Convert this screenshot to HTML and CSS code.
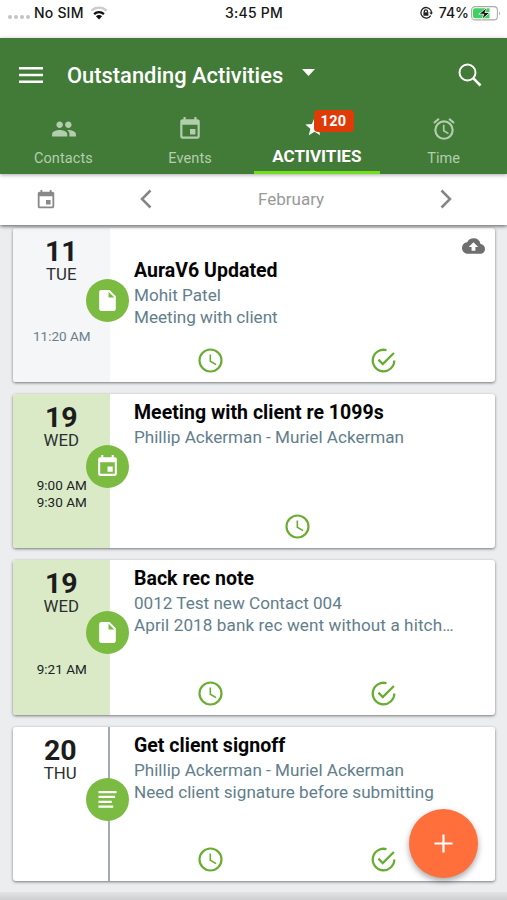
FILE: index.html
```html
<!DOCTYPE html>
<html lang="en">
<head>
<meta charset="utf-8">
<title>Outstanding Activities</title>
<link rel="stylesheet" href="styles.css">
</head>
<body>
<svg class="defs" aria-hidden="true">
  <symbol id="calendar" viewBox="0 0 24 24"><path d="M17 12h-5v5h5v-5zM16 1v2H8V1H6v2H5c-1.11 0-1.99.9-1.99 2L3 19c0 1.1.89 2 2 2h14c1.1 0 2-.9 2-2V5c0-1.1-.9-2-2-2h-1V1h-2zm3 18H5V8h14v11z"/></symbol>
  <symbol id="file" viewBox="0 0 24 24"><path d="M6 2c-1.1 0-2 .9-2 2v16c0 1.1.9 2 2 2h12c1.1 0 2-.9 2-2V8l-6-6H6zm7 7V3.500L18.500 9H13z"/></symbol>
  <symbol id="clock" viewBox="0 0 24 24"><path d="M12 2a10 10 0 1 0 0 20 10 10 0 0 0 0-20zm0 18.200a8.200 8.200 0 1 1 0-16.400 8.200 8.200 0 0 1 0 16.400zM12.500 7H11.200v6l5.100 3 .7-1.100-4.500-2.600V7z"/></symbol>
  <symbol id="check" viewBox="0 0 24 24"><path d="M20.900 12A8.900 8.900 0 1 1 14.500 3.500M7.800 11.300l3.600 3.700L20.600 5.800" fill="none" stroke="currentColor" stroke-width="1.900"/></symbol>
</svg>
<div class="screen">
  <div class="status">
    <div class="status-left">
      <span class="dots"><i></i><i></i><i></i><i></i></span>
      <span class="sim">No SIM</span>
      <svg class="wifi" viewBox="0 0 18 14"><g fill="none" stroke-width="2.300"><path stroke="#ccc" d="M1.300 4.800a11 11 0 0 1 15.400 0"/><path stroke="#111" d="M4.100 8.100a7 7 0 0 1 9.800 0"/></g><path fill="#111" d="M9 13.500L5.900 10.300a4.400 4.400 0 0 1 6.200 0z"/></svg>
    </div>
    <span class="status-time">3:45 PM</span>
    <div class="status-right">
      <svg class="lock" viewBox="0 0 14 14"><g fill="none" stroke="#222" stroke-width="1.300"><path d="M11.700 4A5.300 5.300 0 1 0 11.700 9.600M11.700 4q.7 1.200.7 3"/><path d="M5.300 6.500V5.400a1.600 1.600 0 0 1 3.200 0v1.100"/></g><path fill="#222" d="M4.400 6.200h5v3.600h-5zM10.300 6.400h3.700l-1.800 2.400z"/></svg>
      <span class="percent">74%</span>
      <svg class="battery" viewBox="0 0 30 15"><rect x=".6" y=".6" width="25.800" height="13.300" rx="3.500" fill="#fff" stroke="#aaa" stroke-width="1.100"/><path fill="#3ed35f" d="M4 2.200h14.500v10H4a2 2 0 0 1-2-2v-6a2 2 0 0 1 2-2z"/><path d="M28 5.200q2 2 0 4.200z" fill="#aaa"/><path fill="#111" stroke="#fff" stroke-width=".8" d="M16 1.300L7.800 8.200h5l-2.100 5.400 8.100-7.100h-4.900z"/></svg>
    </div>
  </div>
  <header class="header">
    <div class="toolbar">
      <svg class="menu" viewBox="0 0 24 16"><path d="M0 1.300h24M0 8h24M0 14.700h24" stroke="#fff" stroke-width="2.400"/></svg>
      <h1 class="title">Outstanding Activities</h1>
      <svg class="caret" viewBox="0 0 13 7"><path d="M0 0h13L6.500 7z"/></svg>
      <svg class="search" viewBox="0 0 24 24"><g fill="none" stroke="#fff"><circle cx="9.500" cy="9.500" r="8" stroke-width="2"/><path d="M15.200 15.200l7.300 7.300" stroke-width="2.600"/></g></svg>
    </div>
    <nav class="tabs">
      <div class="tab"><svg class="tab-icon people" viewBox="0 0 24 24"><path d="M16 11c1.660 0 2.990-1.340 2.990-3S17.660 5 16 5s-3 1.340-3 3 1.340 3 3 3zm-8 0c1.660 0 2.990-1.340 2.990-3S9.660 5 8 5 5 6.340 5 8s1.340 3 3 3zm0 2c-2.330 0-7 1.170-7 3.500V19h14v-2.500C15 14.170 10.330 13 8 13zm8 0c-.29 0-.62.02-.97.05 1.160.84 1.970 1.970 1.970 3.450V19h6v-2.500c0-2.330-4.670-3.500-7-3.500z"/></svg><span class="tab-label">Contacts</span></div>
      <div class="tab"><svg class="tab-icon"><use href="#calendar"/></svg><span class="tab-label">Events</span></div>
      <div class="tab active"><svg class="tab-icon" viewBox="0 0 24 24"><path d="M12 17.270L18.180 21l-1.640-7.030L22 9.240l-7.190-.61L12 2 9.190 8.630 2 9.240l5.460 4.730L5.820 21z"/></svg><span class="tab-label">ACTIVITIES</span><span class="count">120</span></div>
      <div class="tab"><svg class="tab-icon" viewBox="0 0 24 24"><path d="M12.500 8H11v6l4.750 2.850.75-1.230-4-2.370zm4.837-6.190l4.607 3.845-1.280 1.535-4.610-3.843zm-10.674 0l1.282 1.536L3.337 7.190l-1.280-1.536zM12 4a9 9 0 1 0 0 18 9 9 0 0 0 0-18zm0 16a7 7 0 1 1 0-14 7 7 0 0 1 0 14z"/></svg><span class="tab-label">Time</span></div>
    </nav>
  </header>
  <div class="month">
    <svg class="month-calendar"><use href="#calendar"/></svg>
    <svg class="chevron" viewBox="0 0 12 20"><path d="M10.500 1.500L2 10l8.500 8.500"/></svg>
    <span class="month-name">February</span>
    <svg class="chevron next" viewBox="0 0 12 20"><path d="M1.500 1.500L10 10l-8.500 8.500"/></svg>
  </div>
  <main class="list">
    <article class="card synced">
      <div class="date pale"><b class="day">11</b><span class="weekday">TUE</span><span class="times">11:20 AM</span></div>
      <div class="body"><h2 class="name">AuraV6 Updated</h2><p class="line">Mohit Patel</p><p class="line">Meeting with client</p>
        <div class="actions"><svg><use href="#clock"/></svg><svg><use href="#check"/></svg></div></div>
      <span class="kind"><svg><use href="#file"/></svg></span>
      <svg class="cloud" viewBox="0 0 24 16"><path d="M19.350 6.040A7.490 7.490 0 0 0 12 0C9.110 0 6.600 1.640 5.350 4.040A5.994 5.994 0 0 0 0 10c0 3.310 2.690 6 6 6h13c2.760 0 5-2.240 5-5 0-2.640-2.050-4.780-4.650-4.960zM14 9v4h-4V9H7l5-5 5 5h-3z"/></svg>
    </article>
    <article class="card">
      <div class="date green"><b class="day">19</b><span class="weekday">WED</span><span class="times">9:00 AM<br>9:30 AM</span></div>
      <div class="body"><h2 class="name">Meeting with client re 1099s</h2><p class="line">Phillip Ackerman - Muriel Ackerman</p>
        <div class="actions"><svg><use href="#clock"/></svg></div></div>
      <span class="kind"><svg><use href="#calendar"/></svg></span>
    </article>
    <article class="card">
      <div class="date green"><b class="day">19</b><span class="weekday">WED</span><span class="times">9:21 AM</span></div>
      <div class="body"><h2 class="name">Back rec note</h2><p class="line">0012 Test new Contact 004</p><p class="line long">April 2018 bank rec went without a hitch…</p>
        <div class="actions"><svg><use href="#clock"/></svg><svg><use href="#check"/></svg></div></div>
      <span class="kind"><svg><use href="#file"/></svg></span>
    </article>
    <article class="card">
      <div class="date ruled"><b class="day">20</b><span class="weekday">THU</span></div>
      <div class="body"><h2 class="name">Get client signoff</h2><p class="line">Phillip Ackerman - Muriel Ackerman</p><p class="line">Need client signature before submitting</p>
        <div class="actions"><svg><use href="#clock"/></svg><svg><use href="#check"/></svg></div></div>
      <span class="kind"><svg viewBox="0 0 20 20"><path d="M.5 2.200h19M.5 7.300h17.500M.5 12.500h14M.5 17.600h15.500" stroke="#fff" stroke-width="2.400"/></svg></span>
    </article>
  </main>
  <div class="bottom-edge"></div>
  <button class="fab" aria-label="Add"><svg viewBox="0 0 20 20"><path d="M10 .5v19M.5 10h19" stroke="#fff" stroke-width="2.300"/></svg></button>
</div>
</body>
</html>
```

FILE: styles.css
```css
* { box-sizing: border-box; }
body { margin: 0; font-family: Roboto, "Liberation Sans", sans-serif; }
h1, h2, p { margin: 0; white-space: nowrap; }
svg { display: block; flex: none; fill: currentColor; }
.defs { position: absolute; width: 0; height: 0; }
.screen { position: relative; width: 507px; height: 900px; overflow: hidden; background: #ebedef; display: flex; flex-direction: column; }

.status { height: 38px; flex: none; background: #fff; display: grid; grid-template-columns: 1fr auto 1fr; align-items: start; padding: 4px 6px 0 8px; font: 500 14px/18px Inter, sans-serif; color: #151515; }
.status-left, .status-right { display: flex; align-items: center; height: 18px; }
.status-right { justify-content: flex-end; }
.dots { display: flex; gap: 2px; margin: 8px 4px 0 0; }
.dots i { width: 4px; height: 4px; border-radius: 50%; background: #c4c4c4; }
.sim { letter-spacing: .2px; }
.wifi { width: 18px; height: 14px; margin-left: 6px; }
.status-time { letter-spacing: .25px; margin-left: -1px; }
.lock { width: 14px; height: 14px; margin-right: 6px; }
.percent { letter-spacing: 0; }
.battery { width: 30px; height: 15px; margin-left: 2px; }

.header { height: 136px; flex: none; background: #427b37; color: #fff; display: flex; flex-direction: column; z-index: 2; box-shadow: 0 1px 4px rgba(0,0,0,.35); }
.toolbar { height: 74px; display: flex; align-items: center; padding: 0 25px 0 19px; }
.menu { width: 24px; height: 16px; }
.title { margin: 2px 0 0 24px; width: 217px; font-size: 21.900px; line-height: 26px; font-weight: 500; }
.caret { width: 13px; height: 7px; margin: -5px 0 0 18px; }
.search { width: 24px; height: 24px; margin-left: auto; }
.tabs { height: 62px; display: grid; grid-template-columns: repeat(4, 1fr); }
.tab { position: relative; display: flex; flex-direction: column; align-items: center; padding-top: 4px; color: #b3ceae; }
.tab-icon { width: 26px; height: 26px; }
.people { width: 28px; margin-left: 1px; }
.tab-label { font-size: 14.500px; line-height: 18px; margin-top: 8px; letter-spacing: .1px; }
.active { color: #fff; border-bottom: 3px solid #70e018; }
.active .tab-icon { width: 23px; height: 22px; margin-top: 0; margin-left: -4px; }
.active .tab-label { margin-top: 9px; font-size: 17px; font-weight: 700; letter-spacing: 0; }
.count { position: absolute; left: 60px; top: -2px; width: 40px; height: 22px; border-radius: 4px; background: #df3b08; font-size: 14.500px; font-weight: 700; line-height: 23px; text-align: center; letter-spacing: .3px; }

.month { height: 51px; flex: none; z-index: 1; background: #fff; color: #898989; display: flex; align-items: center; padding: 0 55px 1px 35px; box-shadow: 0 1px 4px rgba(0,0,0,.65); }
.month-calendar { width: 22px; height: 22px; margin: 2px 83px 0 0; }
.chevron { width: 12px; height: 20px; fill: none; stroke: #858585; stroke-width: 2.500; }
.next { margin-left: auto; }
.month-name { margin-left: 106px; font-size: 17px; line-height: 22px; color: #999; }

.list { flex: none; display: flex; flex-direction: column; gap: 12px; padding: 3px 12px 0 13px; }
.card { position: relative; height: 154.200px; background: #fff; border-radius: 3px; display: flex; box-shadow: 0 1px 3px rgba(0,0,0,.5); }
.date { width: 96.500px; padding-top: 9px; border-radius: 3px 0 0 3px; display: flex; flex-direction: column; align-items: center; color: #202124; }
.pale { background: #f4f6f8; color: #6b7f8a; }
.green { background: #daeac6; }
.ruled { border-right: 2px solid #a0adb2; }
.day { font-size: 28.500px; line-height: 30px; color: #1c1c1c; }
.weekday { font-size: 16.800px; line-height: 16px; margin-top: -1px; color: #2d2f31; }
.times { margin: auto 0 37px; padding-left: 1px; font-size: 13.500px; line-height: 17px; text-align: center; }
.body { flex: 1; display: flex; flex-direction: column; padding: 6px 0 0 24.500px; }
.synced .body { padding-top: 30px; }
.name { font-size: 19.500px; line-height: 25px; font-weight: 700; letter-spacing: .02px; color: #050505; }
.line { font-size: 17.100px; line-height: 22px; color: #627e8c; }
.long { letter-spacing: .1px; }
.name + .line { margin-top: 1px; }
.actions { margin: auto 24.500px 8px -10.500px; height: 26px; display: flex; justify-content: space-around; color: #69ac32; }
.actions svg { width: 29px; height: 29px; margin-top: -2px; }
.kind { position: absolute; left: 73.400px; top: 51px; width: 43px; height: 43px; border-radius: 50%; background: #7bbb41; color: #fff; display: flex; align-items: center; justify-content: center; }
.kind svg { width: 25px; height: 25px; }
.card:last-child .kind svg { width: 19px; height: 19px; }
.cloud { position: absolute; right: 10px; top: 10px; width: 23px; height: 16px; color: #6e6e6e; }
.bottom-edge { margin-top: auto; height: 8px; background: linear-gradient(#e3e4e6, #cfd0d2); }
.fab { position: absolute; left: 409px; top: 809px; width: 69px; height: 69px; border: 0; border-radius: 50%; padding: 0; background: #ff6f3c; display: flex; align-items: center; justify-content: center; box-shadow: 0 3px 6px rgba(0,0,0,.35); }
.fab svg { width: 19px; height: 19px; }
```
